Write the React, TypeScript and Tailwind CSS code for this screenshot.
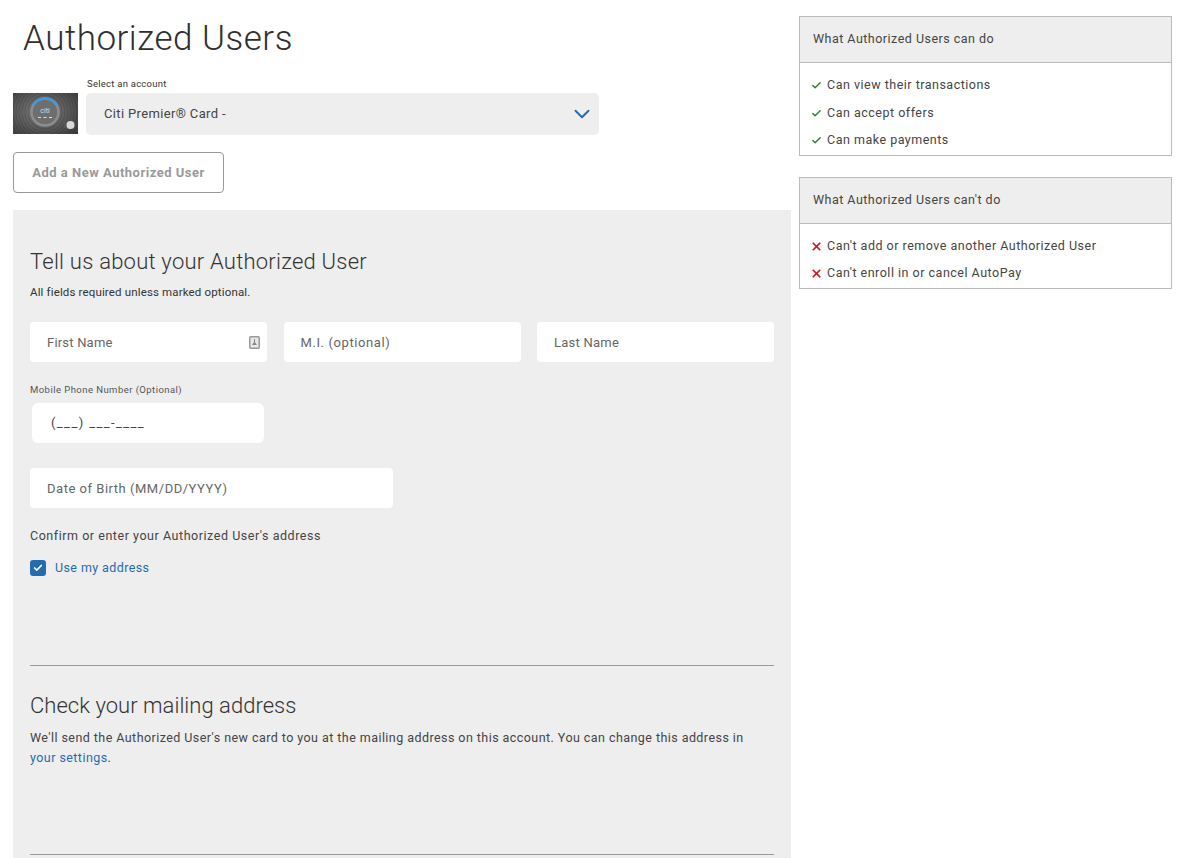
import type { ReactNode } from 'react';
import { ChevronDown, Check, X } from 'lucide-react';

const cans = ['Can view their transactions', 'Can accept offers', 'Can make payments'];
const cants = ["Can't add or remove another Authorized User", "Can't enroll in or cancel AutoPay"];

function Field({ label, className = '', children }: { label: string; className?: string; children?: ReactNode }) {
  return (
    <div className={`h-10 bg-white rounded-[4px] flex items-center justify-between pl-[17px] pr-[7px] text-[13px] text-[#666] ${className}`}>
      <span className="pt-[1px]">{label}</span>
      {children}
    </div>
  );
}

function InfoCard({ title, items, can }: { title: string; items: string[]; can: boolean }) {
  return (
    <div className="border border-[#bbb] bg-white">
      <div className="h-[46px] bg-[#eee] border-b border-[#bbb] flex items-center pl-[13px] text-[12.5px] tracking-[0.48px] text-[#444]">
        {title}
      </div>
      <ul className="pt-[9px] pl-[11px] text-[12.5px] tracking-[0.5px] text-[#444]">
        {items.map(item => (
          <li key={item} className="h-[27.5px] flex items-center gap-[6px]">
            <span className="w-[10px] flex justify-center">
              {can
                ? <Check className="w-[11px] h-[11px] shrink-0 text-[#2e7d32]" strokeWidth={3} />
                : <X className="w-[13px] h-[13px] shrink-0 text-[#d3121c]" strokeWidth={3.2} />}
            </span>
            <span>{item}</span>
          </li>
        ))}
      </ul>
    </div>
  );
}

function CardArt() {
  return (
    <svg width="65" height="41" viewBox="0 0 65 41" className="block shrink-0">
      <defs>
        <radialGradient id="cardBg" cx="0.45" cy="0.45" r="0.75">
          <stop offset="0" stopColor="#808080" />
          <stop offset="1" stopColor="#3a3a3a" />
        </radialGradient>
      </defs>
      <rect width="65" height="41" fill="url(#cardBg)" />
      {[17, 20, 23, 26, 29, 32, 35].map(r => (
        <circle key={r} cx="32" cy="19" r={r} fill="none" stroke="#000" strokeOpacity="0.14" strokeWidth="1" />
      ))}
      <circle cx="32" cy="19" r="13.5" fill="#6e6e6e" stroke="#8d8d8d" strokeWidth="2.5" />
      <path d="M20 12.8 A13.5 13.5 0 0 1 44 12.8" fill="none" stroke="#3f9be0" strokeWidth="2.5" />
      <text x="32" y="20" textAnchor="middle" fontSize="7" fill="#ddd">citi</text>
      <rect x="25" y="24" width="3" height="1" fill="#ddd" />
      <rect x="30.5" y="24" width="3" height="1" fill="#ddd" />
      <rect x="36" y="24" width="3" height="1" fill="#ddd" />
      <circle cx="54.5" cy="32" r="4" fill="#555" />
      <circle cx="57.5" cy="32" r="4" fill="#d8d8d8" />
    </svg>
  );
}

export default function App() {
  return (
    <div className="font-['Roboto','Liberation_Sans',sans-serif] h-screen overflow-hidden bg-white flex text-[#333]">
      <div className="w-[791px] pl-[13px] shrink-0">
        <h1 className="pl-[10px] pt-[16px] h-[78px] text-[35px] leading-[46px] font-light tracking-[0.5px] text-[#2f2f2f]">
          Authorized Users
        </h1>

        {/* account select */}
        <div className="flex gap-[8px]">
          <div className="pt-[15px]"><CardArt /></div>
          <div className="w-[513px]">
            <div className="h-[15px] pl-[1px] text-[9.5px] leading-[12px] tracking-[0.25px] text-[#333]">Select an account</div>
            <div className="h-[42px] bg-[#eee] rounded-[5px] flex items-center justify-between pl-[18px] pr-[4px] text-[13px] tracking-[0.35px] text-[#444]">
              <span>Citi Premier® Card -</span>
              <ChevronDown className="w-[26px] h-[26px] text-[#256bb0]" strokeWidth={1.8} />
            </div>
          </div>
        </div>

        <button className="mt-[17px] block w-[211px] h-[41px] border border-[#999] rounded-[4px] text-[13px] font-bold tracking-[0.5px] text-[#999]">
          Add a New Authorized User
        </button>

        <div className="mt-[17px] bg-[#eee] h-[700px] px-[17px] pt-[37px]">
          <h2 className="text-[22px] leading-[30px] font-light tracking-[0.23px] text-[#333]">Tell us about your Authorized User</h2>
          <p className="mt-[7px] text-[11.5px] leading-[16px] tracking-[0.15px] text-[#333]">All fields required unless marked optional.</p>

          <div className="mt-[22px] grid grid-cols-[237px_237px_237px] gap-[16.5px]">
            <Field label="First Name" className="tracking-[0.2px]">
              <svg width="11" height="13" viewBox="0 0 11 13" className="shrink-0">
                <rect x="0.75" y="0.75" width="9.5" height="11.5" rx="1" fill="#e8e8e8" stroke="#999" strokeWidth="1.5" />
                <rect x="5" y="3" width="1" height="3" fill="#888" />
                <path d="M3 9 L5.5 5.5 L8 9 Z" fill="#888" />
              </svg>
            </Field>
            <Field label="M.I. (optional)" className="tracking-[0.6px]" />
            <Field label="Last Name" className="tracking-[0.25px]" />
          </div>

          <div className="mt-[22px] h-[19px] text-[9.5px] leading-[12px] tracking-[0.45px] text-[#555]">Mobile Phone Number (Optional)</div>
          <div className="ml-[2px] w-[232px] h-10 bg-white rounded-[6px] flex items-center pl-[19px] text-[13px] tracking-[1.4px] text-[#444]">
            (___) ___-____
          </div>

          <Field label="Date of Birth (MM/DD/YYYY)" className="mt-[25px] w-[363px] tracking-[0.52px]" />

          <p className="mt-[19px] text-[12.5px] leading-[18px] tracking-[0.54px] text-[#444]">Confirm or enter your Authorized User's address</p>

          <div className="mt-[14px] flex items-center gap-[9px]">
            <div className="w-[16px] h-[16px] rounded-[3px] bg-[#256bb0] flex items-center justify-center">
              <Check className="w-[10px] h-[10px] text-white" strokeWidth={4} />
            </div>
            <span className="text-[12.5px] tracking-[0.4px] text-[#256bb0]">Use my address</span>
          </div>

          <hr className="mt-[87px] border-t border-[#999]" />

          <h2 className="mt-[25px] text-[22px] leading-[30px] font-light tracking-[0.03px] text-[#333]">Check your mailing address</h2>
          <p className="mt-[7px] text-[12.5px] leading-[20px] tracking-[0.44px] text-[#444]">
            We'll send the Authorized User's new card to you at the mailing address on this account. You can change this address in
            <br />
            <span className="text-[#256bb0]">your settings</span>.
          </p>

          <hr className="mt-[86px] border-t border-[#999]" />
        </div>
      </div>

      <div className="w-[373px] ml-[8px] pt-[16px] flex flex-col gap-[21px] shrink-0">
        <InfoCard title="What Authorized Users can do" items={cans} can />
        <InfoCard title="What Authorized Users can't do" items={cants} can={false} />
      </div>
    </div>
  );
}
